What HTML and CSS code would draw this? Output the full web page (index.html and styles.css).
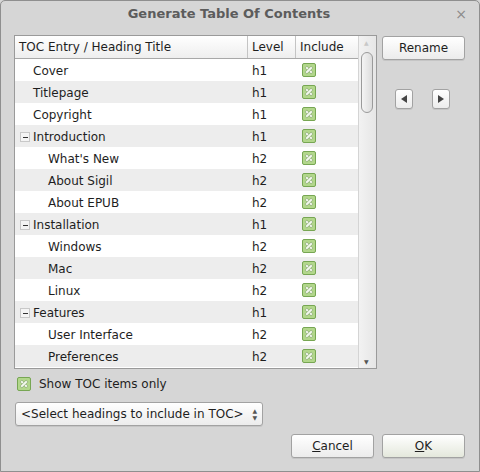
FILE: index.html
```html
<!DOCTYPE html>
<html>
<head>
<meta charset="utf-8">
<link rel="stylesheet" href="styles.css">
</head>
<body>
<div class="dialog">
  <div class="titlebar">
    <span class="title">Generate Table Of Contents</span>
    <span class="close">×</span>
  </div>
  <div class="main">
    <div class="tablebox">
      <div class="table">
        <div class="thead">
          <div class="c1">TOC Entry / Heading Title</div>
          <div class="c2">Level</div>
          <div class="c3">Include</div>
        </div>
        <div class="row"><div class="c1 l1">Cover</div><div class="c2">h1</div><div class="c3"><span class="cb"></span></div></div>
        <div class="row alt"><div class="c1 l1">Titlepage</div><div class="c2">h1</div><div class="c3"><span class="cb"></span></div></div>
        <div class="row"><div class="c1 l1">Copyright</div><div class="c2">h1</div><div class="c3"><span class="cb"></span></div></div>
        <div class="row alt"><div class="c1 l0"><span class="minus"></span>Introduction</div><div class="c2">h1</div><div class="c3"><span class="cb"></span></div></div>
        <div class="row"><div class="c1 l2">What's New</div><div class="c2">h2</div><div class="c3"><span class="cb"></span></div></div>
        <div class="row alt"><div class="c1 l2">About Sigil</div><div class="c2">h2</div><div class="c3"><span class="cb"></span></div></div>
        <div class="row"><div class="c1 l2">About EPUB</div><div class="c2">h2</div><div class="c3"><span class="cb"></span></div></div>
        <div class="row alt"><div class="c1 l0"><span class="minus"></span>Installation</div><div class="c2">h1</div><div class="c3"><span class="cb"></span></div></div>
        <div class="row"><div class="c1 l2">Windows</div><div class="c2">h2</div><div class="c3"><span class="cb"></span></div></div>
        <div class="row alt"><div class="c1 l2">Mac</div><div class="c2">h2</div><div class="c3"><span class="cb"></span></div></div>
        <div class="row"><div class="c1 l2">Linux</div><div class="c2">h2</div><div class="c3"><span class="cb"></span></div></div>
        <div class="row alt"><div class="c1 l0"><span class="minus"></span>Features</div><div class="c2">h1</div><div class="c3"><span class="cb"></span></div></div>
        <div class="row"><div class="c1 l2">User Interface</div><div class="c2">h2</div><div class="c3"><span class="cb"></span></div></div>
        <div class="row alt"><div class="c1 l2">Preferences</div><div class="c2">h2</div><div class="c3"><span class="cb"></span></div></div>
      </div>
      <div class="scrollbar">
        <span class="sarrow up">▲</span>
        <div class="thumb"></div>
        <span class="sarrow down">▼</span>
      </div>
    </div>
    <div class="side">
      <button class="btn rename">Rename</button>
      <div class="arrows">
        <button class="btn small"><span class="tri left"></span></button>
        <button class="btn small"><span class="tri right"></span></button>
      </div>
    </div>
  </div>
  <div class="showonly"><span class="cb"></span><span>Show TOC items only</span></div>
  <div class="combo"><span>&lt;Select headings to include in TOC&gt;</span><span class="spin"><span>▲</span><span>▼</span></span></div>
  <div class="footer">
    <button class="btn dlg"><u>C</u>ancel</button>
    <button class="btn dlg ok"><u>O</u>K</button>
  </div>
</div>
</body>
</html>
```

FILE: styles.css
```css
* { box-sizing: border-box; }
html, body { margin: 0; padding: 0; }
body {
  width: 480px;
  height: 472px;
  font-family: "DejaVu Sans", sans-serif;
  font-size: 12px;
  color: #1e1e1e;
  background: #d6d6d6;
  overflow: hidden;
}
.dialog {
  width: 480px;
  height: 472px;
  background: #d6d6d6;
  border: 1px solid #8f8f8f;
  border-radius: 5px 5px 0 0;
  position: relative;
}
.titlebar {
  height: 27px;
  display: flex;
  align-items: center;
  justify-content: center;
  position: relative;
}
.title {
  font-weight: bold;
  font-size: 13px;
  color: #5c5c5c;
  margin-left: -22px;
  margin-top: -2px;
}
.close {
  position: absolute;
  right: 12px;
  top: 5px;
  font-size: 14px;
  color: #8a8a8a;
}
.main {
  display: flex;
  padding-left: 13px;
  margin-top: 7px;
}
.tablebox {
  width: 363px;
  height: 334px;
  border: 1px solid #9a9a9a;
  background: #fff;
  display: flex;
}
.table {
  width: 343px;
}
.thead {
  display: flex;
  height: 23px;
  background: linear-gradient(#ffffff, #eeeeee);
  border-bottom: 1px solid #a8a8a8;
}
.thead > div { padding-left: 4px; padding-top: 1px; line-height: 21px; }
.thead .c1 { width: 233px; border-right: 1px solid #c4c4c4; }
.thead .c2 { width: 48px; border-right: 1px solid #c4c4c4; }
.thead .c3 { width: 62px; }
.row {
  display: flex;
  height: 22px;
  background: #ffffff;
}
.row > div { padding-top: 2px; line-height: 20px; }
.row.alt { background: #ededed; }
.row .c1 { width: 233px; display: flex; align-items: center; }
.row .c2 { width: 48px; padding-left: 4px; }
.row .c3 { width: 62px; display: flex; align-items: center; padding-left: 6px; padding-top: 0; }
.l1 { padding-left: 18px; }
.l2 { padding-left: 33px; }
.l0 { padding-left: 5px; }
.minus {
  width: 10px;
  height: 10px;
  border: 1px solid #c8c8c8;
  background: #f4f4f4;
  margin-right: 3px;
  margin-top: -1px;
  position: relative;
}
.minus::after {
  content: "";
  position: absolute;
  left: 2px;
  top: 4px;
  width: 5px;
  height: 1px;
  background: #333;
}
.cb {
  display: inline-block;
  width: 14px;
  height: 14px;
  border: 1px solid #77a653;
  border-radius: 2px;
  background: #b2d78b;
  position: relative;
}
.cb::before, .cb::after {
  content: "";
  position: absolute;
  left: 2px;
  top: 5px;
  width: 8px;
  height: 2px;
  background: #f3f8ee;
  box-shadow: 0 0 0 0.5px #8aa874;
  transform: rotate(45deg);
}
.cb::after { transform: rotate(-45deg); }
.scrollbar {
  width: 18px;
  border-left: 1px solid #d4d4d4;
  background: linear-gradient(90deg, #f2f2f2, #e6e6e6);
  position: relative;
}
.thumb {
  position: absolute;
  left: 2px;
  top: 16px;
  width: 12px;
  height: 61px;
  border: 1px solid #9a9a9a;
  border-radius: 6px;
  background: linear-gradient(90deg, #f4f4f4, #dcdcdc);
}
.sarrow {
  position: absolute;
  left: 5px;
  font-size: 6px;
  color: #c8c8c8;
}
.sarrow.up { top: 3px; }
.sarrow.down { bottom: 3px; color: #555; }
.side {
  margin-left: 5px;
  display: flex;
  flex-direction: column;
}
.btn {
  font-family: "DejaVu Sans", sans-serif;
  font-size: 12px;
  color: #1e1e1e;
  background: linear-gradient(#ffffff, #ececec);
  border: 1px solid #a2a2a2;
  border-radius: 3px;
  padding: 0;
  box-shadow: 0 1px 0 rgba(0,0,0,0.08);
}
.rename {
  width: 83px;
  height: 24px;
  margin-top: 1px;
}
.arrows {
  display: flex;
  gap: 19px;
  margin-top: 29px;
  padding-left: 13px;
}
.small {
  width: 18px;
  height: 20px;
  display: flex;
  align-items: center;
  justify-content: center;
}
.tri {
  width: 0;
  height: 0;
  border-top: 4px solid transparent;
  border-bottom: 4px solid transparent;
}
.tri.left { border-right: 6px solid #444; }
.tri.right { border-left: 6px solid #444; }
.showonly {
  display: flex;
  align-items: center;
  gap: 8px;
  margin: 7px 0 0 16px;
  height: 16px;
}
.combo {
  margin: 10px 0 0 14px;
  width: 248px;
  height: 24px;
  border: 1px solid #a2a2a2;
  border-radius: 3px;
  background: linear-gradient(#ffffff, #ececec);
  display: flex;
  align-items: center;
  justify-content: space-between;
  padding: 0 5px 0 5px;
  box-shadow: 0 1px 0 rgba(0,0,0,0.08);
}
.spin {
  display: flex;
  flex-direction: column;
  font-size: 6px;
  line-height: 7px;
  color: #555;
}
.footer {
  display: flex;
  justify-content: flex-end;
  gap: 8px;
  margin-top: 8px;
  padding-right: 14px;
}
.dlg {
  width: 83px;
  height: 24px;
}
.ok {
  background: linear-gradient(#ffffff, #e4e8dc);
}
```
